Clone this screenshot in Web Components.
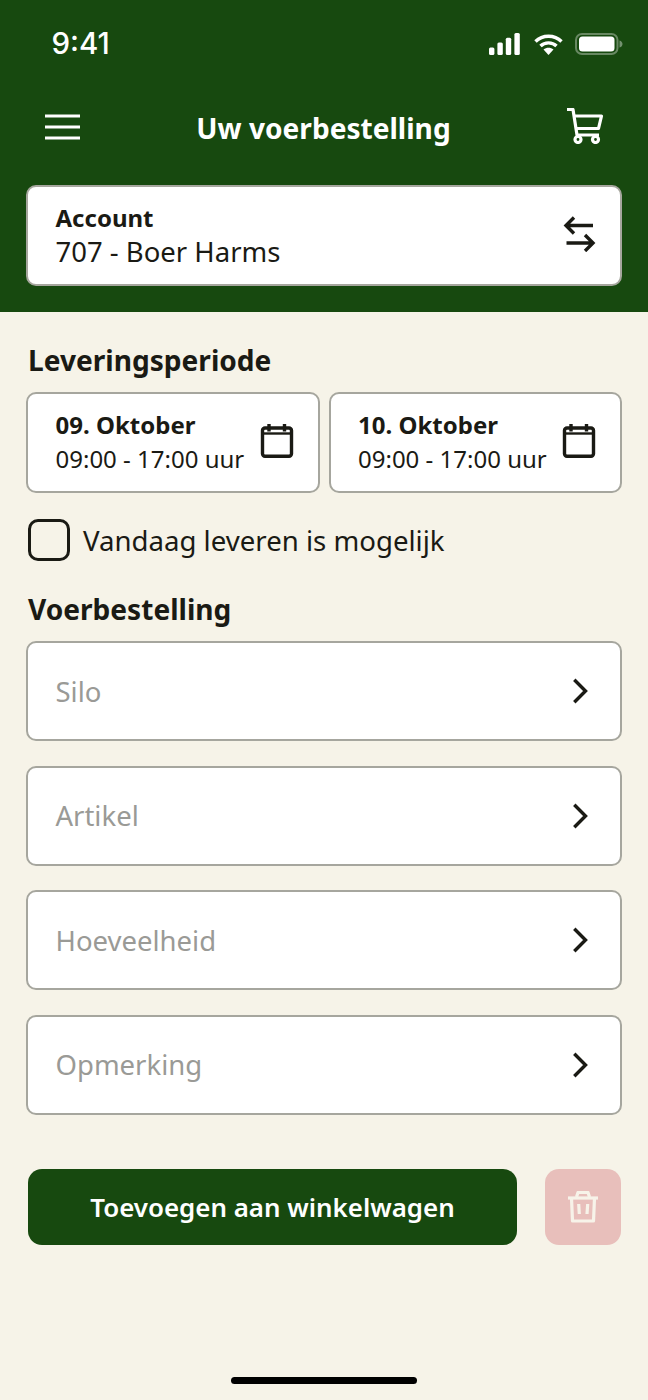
<!DOCTYPE html>
<html lang="nl">
<head>
<meta charset="utf-8">
<title>Uw voerbestelling</title>
<style>
  html, body { margin: 0; padding: 0; }
  body {
    width: 648px;
    height: 1400px;
    overflow: hidden;
    background: #f6f3e8;
    font-family: "Noto Sans", "Liberation Sans", sans-serif;
    color: #1a1a14;
  }
  voer-app { display: block; }
</style>
</head>
<body>
<voer-app></voer-app>

<script>
const ICONS = {
  swap: `<svg width="34" height="36" viewBox="0 0 34 36" fill="none" stroke="#1a1a14" stroke-width="3.400"><path d="M4 9.500H31M12 1.500L4 9.500L12 17.500"/><path d="M4.500 27H31M23 19L31 27L23 35"/></svg>`,
  calendar: `<svg width="34" height="36" viewBox="0 0 34 36" fill="none" stroke="#1a1a14" stroke-width="3.400" stroke-linejoin="round"><rect x="2.500" y="5" width="29" height="28.300" rx="2.500"/><path d="M2.500 10.500H31.500" stroke-width="2.400"/><path d="M9 1V8.500M24.500 1V8.500" stroke-width="3.400"/></svg>`,
  chevron: `<svg width="18" height="28" viewBox="0 0 18 28" fill="none" stroke="#1a1a14" stroke-width="3.400"><path d="M2.300 2.700L13.500 14L2.300 25.300"/></svg>`,
  menu: `<svg width="35" height="26" viewBox="0 0 35 26" fill="none" stroke="#fff" stroke-width="3"><path d="M0 2H35M0 13H35M0 24H35"/></svg>`,
  cart: `<svg width="38" height="36" viewBox="0 0 38 36" fill="none" stroke="#fff" stroke-width="3.200" stroke-linejoin="round"><path d="M1 1.500H7L11 27H33"/><path d="M8 8H35.500L32.500 20.500H10"/><circle cx="12" cy="31.500" r="3"/><circle cx="29.500" cy="31.500" r="3"/></svg>`,
  trash: `<svg width="32" height="32" viewBox="0 0 32 32" fill="none" stroke="#f7f3e9" stroke-width="3.200" stroke-linejoin="round"><path d="M1 7H31"/><path d="M4.500 7L5.500 30H26.500L27.500 7"/><path d="M9.500 6L11 1.500H21L22.500 6"/><path d="M11.700 13L12.300 23M20.700 13L20 23"/></svg>`
}

class StatusBar extends HTMLElement {
  constructor() {
    super()
    this.attachShadow({ mode: 'open' }).innerHTML = `
      <style>
        :host { display: flex; align-items: center; justify-content: space-between; height: 90px; padding: 0 25px 2px 51.500px; box-sizing: border-box; }
        .time { font: 500 29.500px/1 Inter, "Liberation Sans", sans-serif; color: #fff; }
        .icons { display: flex; align-items: center; gap: 12px; }
        .signal { margin-right: 2px; }
      </style>
      <span class="time">9:41</span>
      <span class="icons">
        <svg class="signal" width="31" height="22" viewBox="0 0 31 22" fill="#fff"><rect x="0" y="14.500" width="5.400" height="7.500" rx="1.500"/><rect x="8.400" y="9.500" width="5.400" height="12.500" rx="1.500"/><rect x="16.800" y="4.800" width="5.400" height="17.200" rx="1.500"/><rect x="25.400" y="0" width="5.400" height="22" rx="1.500"/></svg>
        <svg width="29" height="21" viewBox="0 0 29 21" fill="none" stroke="#fff" stroke-width="3.400"><path d="M1.500 7.500C8.500 .5 20.500 .5 27.500 7.500"/><path d="M6.500 12C10.800 7.800 18.200 7.800 22.500 12"/><path d="M9.500 15.500L14.500 21L19.500 15.500C16.500 13 12.500 13 9.500 15.500Z" fill="#fff" stroke="none"/></svg>
        <svg width="48" height="22" viewBox="0 0 48 22" fill="none"><rect x="1" y="1" width="41.500" height="20" rx="6" stroke="#fff" stroke-opacity=".35" stroke-width="2"/><rect x="4" y="3.500" width="35.500" height="15" rx="3.500" fill="#fff"/><path d="M44.500 7.500C46.500 8 47.500 9.500 47.500 11C47.500 12.500 46.500 14 44.500 14.500Z" fill="#fff" fill-opacity=".4"/></svg>
      </span>`
  }
}

class TopBar extends HTMLElement {
  constructor() {
    super()
    this.attachShadow({ mode: 'open' }).innerHTML = `
      <style>
        :host { display: flex; align-items: center; justify-content: space-between; height: 76px; padding: 0 44px 0 45px; box-sizing: border-box; }
        h1 { margin: 0 0 0 1px; font-size: 28.100px; font-weight: 700; line-height: 1; color: #fff; }
        .cart { margin: -4px 0 0 0; display: flex; }
        .menu { display: flex; margin-top: -2px; }
      </style>
      <span class="menu">${ICONS.menu}</span>
      <h1><slot></slot></h1>
      <span class="cart">${ICONS.cart}</span>`
  }
}

// witte kaart met rand, gebruikt door account, datum en invoerregels
const BOX_CSS = `
  box-sizing: border-box;
  background: #fff;
  border: 2px solid #a6a69e;
  border-radius: 10px;
`

class InfoCard extends HTMLElement {
  constructor() {
    super()
    const icon = ICONS[this.getAttribute('icon')] || ''
    this.attachShadow({ mode: 'open' }).innerHTML = `
      <style>
        :host { ${BOX_CSS} display: flex; align-items: center; justify-content: space-between; height: 101px; padding: 0 24px 0 27.500px; min-width: 0; }
        .txt { display: flex; flex-direction: column; gap: 2px; white-space: nowrap; }
        .k { font-size: 24px; font-weight: 700; line-height: 31px; }
        .v { font-size: var(--value-size, 24px); line-height: 34px; }
        .ic { display: flex; flex: none; margin-top: -4px; }
      </style>
      <div class="txt">
        <span class="k"><slot name="title"></slot></span>
        <span class="v"><slot name="value"></slot></span>
      </div>
      <span class="ic">${icon}</span>`
  }
}

class SectionTitle extends HTMLElement {
  constructor() {
    super()
    this.attachShadow({ mode: 'open' }).innerHTML = `
      <style>
        :host { display: block; font-size: 28.100px; font-weight: 700; line-height: 36px; margin-left: 2px; }
      </style>
      <slot></slot>`
  }
}

class CheckRow extends HTMLElement {
  constructor() {
    super()
    this.attachShadow({ mode: 'open' }).innerHTML = `
      <style>
        :host { display: flex; align-items: center; gap: 13.500px; margin-left: 1.500px; height: 42px; font-size: 27.600px; line-height: 36px; }
        .b { box-sizing: border-box; width: 42px; height: 42px; border: 3px solid #1a1a14; border-radius: 10px; flex: none; }
      </style>
      <span class="b"></span>
      <span><slot></slot></span>`
  }
}

class FieldRow extends HTMLElement {
  constructor() {
    super()
    this.attachShadow({ mode: 'open' }).innerHTML = `
      <style>
        :host { ${BOX_CSS} display: flex; align-items: center; justify-content: space-between; height: 100px; padding: 0 30px 0 27.500px; font-size: 27.500px; color: #9a9a96; }
        .ic { display: flex; }
      </style>
      <span class="t"><slot></slot></span>
      <span class="ic">${ICONS.chevron}</span>`
  }
}

class ActionRow extends HTMLElement {
  constructor() {
    super()
    this.attachShadow({ mode: 'open' }).innerHTML = `
      <style>
        :host { display: flex; justify-content: space-between; margin: 0 1px 0 2px; }
        .add { display: flex; align-items: center; justify-content: center; width: 489px; height: 76px; background: #17490f; border-radius: 14px; color: #fff; font-size: 25.900px; font-weight: 600; }
        .del { display: flex; align-items: center; justify-content: center; width: 76px; height: 76px; background: #e8bfbb; border-radius: 14px; }
      </style>
      <span class="add"><slot></slot></span>
      <span class="del">${ICONS.trash}</span>`
  }
}

class VoerApp extends HTMLElement {
  constructor() {
    super()
    this.attachShadow({ mode: 'open' }).innerHTML = `
      <style>
        :host { display: flex; flex-direction: column; height: 1400px; position: relative; }
        header { background: #17490f; height: 312px; box-sizing: border-box; }
        .account { margin: 19px 26px 0; --value-size: 27.500px; }
        main { display: flex; flex-direction: column; padding: 0 26px; }
        .dates { display: grid; grid-template-columns: 1fr 1fr; gap: 9px; margin-top: 14.500px; }
        .fields { display: flex; flex-direction: column; gap: 24.500px; margin-top: 14.500px; }
        section-title.first { margin-top: 29.500px; }
        check-row { margin-top: 26px; }
        section-title.second { margin-top: 29.500px; }
        action-row { margin-top: 54.500px; }
        .home { position: absolute; left: 231px; bottom: 16px; width: 186px; height: 7px; border-radius: 4px; background: #000; }
      </style>
      <header>
        <status-bar></status-bar>
        <top-bar>Uw voerbestelling</top-bar>
        <info-card class="account" icon="swap">
          <span slot="title">Account</span>
          <span slot="value">707 - Boer Harms</span>
        </info-card>
      </header>
      <main>
        <section-title class="first">Leveringsperiode</section-title>
        <div class="dates">
          <info-card icon="calendar">
            <span slot="title">09. Oktober</span>
            <span slot="value">09:00 - 17:00 uur</span>
          </info-card>
          <info-card icon="calendar">
            <span slot="title">10. Oktober</span>
            <span slot="value">09:00 - 17:00 uur</span>
          </info-card>
        </div>
        <check-row>Vandaag leveren is mogelijk</check-row>
        <section-title class="second">Voerbestelling</section-title>
        <div class="fields">
          <field-row>Silo</field-row>
          <field-row>Artikel</field-row>
          <field-row>Hoeveelheid</field-row>
          <field-row>Opmerking</field-row>
        </div>
        <action-row>Toevoegen aan winkelwagen</action-row>
      </main>
      <div class="home"></div>`
  }
}

customElements.define('status-bar', StatusBar)
customElements.define('top-bar', TopBar)
customElements.define('info-card', InfoCard)
customElements.define('section-title', SectionTitle)
customElements.define('check-row', CheckRow)
customElements.define('field-row', FieldRow)
customElements.define('action-row', ActionRow)
customElements.define('voer-app', VoerApp)
</script>
</body>
</html>
